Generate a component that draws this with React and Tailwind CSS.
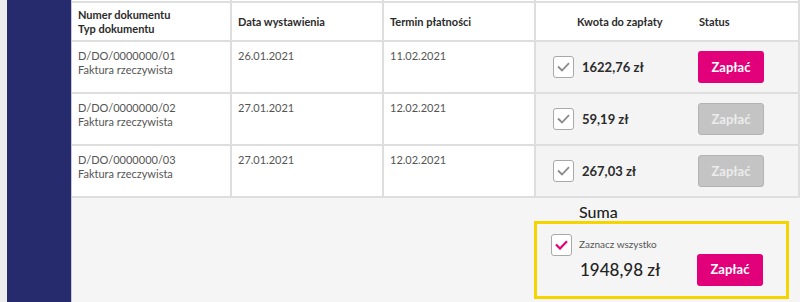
import React from 'react';

const rows = [
  { nr: 'D/DO/0000000/01', date: '26.01.2021', due: '11.02.2021', amount: '1622,76 zł', active: true },
  { nr: 'D/DO/0000000/02', date: '27.01.2021', due: '12.02.2021', amount: '59,19 zł', active: false },
  { nr: 'D/DO/0000000/03', date: '27.01.2021', due: '12.02.2021', amount: '267,03 zł', active: false },
];

function Check({ pink }) {
  return (
    <div className="flex h-[22px] w-[21px] shrink-0 items-center justify-center rounded-[3px] border border-[#a9a9a9] bg-white">
      <svg width="13" height="10" viewBox="0 0 13 10" fill="none">
        <path d="M1 4.5 L5 8.5 L12 1.2" stroke={pink ? '#e2007a' : '#8a8a8a'} strokeWidth={pink ? 2.2 : 1.8} />
      </svg>
    </div>
  );
}

function PayButton({ active }) {
  return active ? (
    <button className="h-[32px] w-[66px] shrink-0 rounded-[3px] bg-[#e2007a] text-[13px] font-bold text-white">Zapłać</button>
  ) : (
    <button className="h-[32px] w-[66px] shrink-0 rounded-[3px] border border-[#b3b3b3] bg-[#c4c4c4] text-[13px] font-bold text-[#ececec]">Zapłać</button>
  );
}

export default function App() {
  return (
    <div className="flex h-[302px] w-[800px] overflow-hidden bg-[#ededed] font-['Lato',sans-serif]">
      <div className="ml-[7px] w-[65px] shrink-0 border-r border-[#c9cad6] bg-[#262b6e]" />
      <div className="flex flex-1 flex-col bg-[#f5f5f5]">
        {/* top stub */}
        <div className="grid h-[3px] grid-cols-[160px_152px_152px_1fr] border-b-2 border-[#dedede] bg-white">
          <div className="border-r-2 border-[#dedede]" />
          <div className="border-r-2 border-[#dedede]" />
          <div className="border-r-2 border-[#dedede]" />
          <div className="border-r-2 border-[#dedede]" />
        </div>

        {/* header */}
        <div className="grid h-[39px] grid-cols-[160px_152px_152px_1fr] border-b-2 border-[#dedede] bg-white text-[11px] font-bold leading-[14px] text-[#2b2b2b]">
          <div className="flex flex-col justify-center border-r-2 border-[#dedede] pl-[6px]">
            <span>Numer dokumentu</span>
            <span>Typ dokumentu</span>
          </div>
          <div className="flex items-center border-r-2 border-[#dedede] pl-[6px]">Data wystawienia</div>
          <div className="flex items-center border-r-2 border-[#dedede] pl-[6px]">Termin płatności</div>
          <div className="flex items-center border-r-2 border-[#dedede]">
            <span className="w-[163px] pl-[41px]">Kwota do zapłaty</span>
            <span>Status</span>
          </div>
        </div>

        {rows.map((r) => (
          <div key={r.nr} className="grid h-[52px] grid-cols-[160px_152px_152px_1fr] border-b-2 border-[#dedede] text-[11px] leading-[14px] text-[#555]">
            <div className="border-r-2 border-[#dedede] bg-white pl-[6px] pt-[7px]">
              <div>{r.nr}</div>
              <div>Faktura rzeczywista</div>
            </div>
            <div className="border-r-2 border-[#dedede] bg-white pl-[6px] pt-[7px]">{r.date}</div>
            <div className="border-r-2 border-[#dedede] bg-white pl-[6px] pt-[7px]">{r.due}</div>
            <div className="flex items-center border-r-2 border-[#dedede] bg-[#f4f4f4]">
              <div className="ml-[17px] flex w-[145px] items-center gap-[8px]">
                <Check />
                <span className="text-[13px] font-bold text-[#2b2b2b]">{r.amount}</span>
              </div>
              <PayButton active={r.active} />
            </div>
          </div>
        ))}

        {/* summary */}
        <div className="flex flex-1 flex-col items-start pl-[462px]">
          <div className="ml-[45px] mt-[4px] text-[16px] font-medium leading-[20px] text-[#222]">Suma</div>
          <div className="mt-[-1px] h-[78px] w-[255px] border-[3px] border-[#f5d400] pl-[14px] pt-[10px]">
            <div className="flex items-start gap-[7px]">
              <Check pink />
              <span className="mt-[3px] text-[10px] text-[#555]">Zaznacz wszystko</span>
            </div>
            <div className="mt-[-2px] flex items-center">
              <span className="ml-[29px] w-[117px] text-[17px] font-medium text-[#222]">1948,98 zł</span>
              <PayButton active />
            </div>
          </div>
        </div>
      </div>
    </div>
  );
}
